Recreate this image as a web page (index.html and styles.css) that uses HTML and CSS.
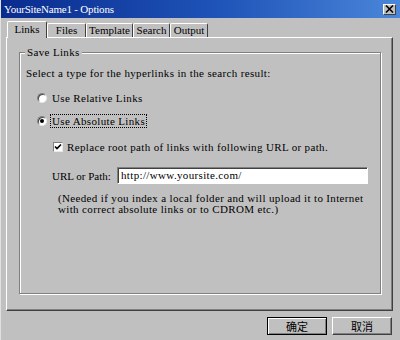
FILE: index.html
```html
<!DOCTYPE html>
<html lang="en">
<head>
    <meta charset="UTF-8">
    <title>YourSiteName1 - Options</title>
    <link rel="stylesheet" href="styles.css">
</head>
<body>
    <div class="window">
        <div class="titlebar">
            <span class="title">YourSiteName1 - Options</span>
            <span class="close-btn">
                <svg width="9" height="8" viewBox="0 0 9 8">
                    <path d="M1 0.5 L8 7.5 M8 0.5 L1 7.5" stroke="#000" stroke-width="1.6"/>
                </svg>
            </span>
        </div>

        <div class="dialog-body">
            <div class="tabs">
                <div class="tab active tab-links">Links</div>
                <div class="tab tab-files">Files</div>
                <div class="tab tab-template">Template</div>
                <div class="tab tab-search">Search</div>
                <div class="tab tab-output">Output</div>
            </div>

            <div class="panel">
                <fieldset class="group">
                    <legend>Save Links</legend>
                    <p class="intro">Select a type for the hyperlinks in the search result:</p>

                    <div class="option option-first">
                        <span class="radio"></span>
                        <span class="option-label">Use Relative Links</span>
                    </div>
                    <div class="option">
                        <span class="radio checked"></span>
                        <span class="option-label focused">Use Absolute Links</span>
                    </div>

                    <div class="check-row">
                        <span class="checkbox">
                            <svg width="8" height="8" viewBox="0 0 8 8">
                                <path d="M1 3.5 L3 5.5 L7 1.5" stroke="#000" stroke-width="1.7" fill="none"/>
                            </svg>
                        </span>
                        <span>Replace root path of links with following URL or path.</span>
                    </div>

                    <div class="url-row">
                        <span class="url-label">URL or Path:</span>
                        <span class="url-field">http://www.yoursite.com/</span>
                    </div>

                    <p class="note">(Needed if you index a local folder and will upload it to Internet<br>with correct absolute links or to CDROM etc.)</p>
                </fieldset>
            </div>

            <div class="buttons">
                <button class="btn default">确定</button>
                <button class="btn">取消</button>
            </div>
        </div>
    </div>
</body>
</html>
```

FILE: styles.css
```css
/* classic dialog look */
body {
    margin: 0;
    padding: 0;
    background-color: #c0c0c0;
}

.window {
    width: 400px;
    height: 340px;
    background-color: #c0c0c0;
    box-sizing: border-box;
    border-left: 1px solid #e0e0e0;
    font-family: "Liberation Serif", serif;
    font-size: 11px;
    letter-spacing: 0.35px;
    color: #000;
    overflow: hidden;
}

.titlebar {
    height: 18px;
    display: flex;
    align-items: center;
    justify-content: space-between;
    padding: 0 4px 0 3px;
    background: linear-gradient(to right, #0a2b8e, #1f54b8 55%, #4a86da);
}

.title {
    color: #fff;
    letter-spacing: -0.2px;
}

.close-btn {
    width: 13px;
    height: 11px;
    box-sizing: border-box;
    background-color: #c0c0c0;
    border: 1px solid;
    border-color: #fff #404040 #404040 #fff;
    display: flex;
    align-items: center;
    justify-content: center;
}

.dialog-body {
    padding: 0 7px 0 5px;
}

/* tabs */
.tabs {
    display: flex;
    align-items: flex-end;
    height: 19px;
    padding-left: 1px;
}

.tab {
    position: relative;
    height: 14px;
    line-height: 13px;
    box-sizing: border-box;
    text-align: center;
    letter-spacing: 0;
    background-color: #c0c0c0;
    border-top: 1px solid #fff;
    border-left: 1px solid #fff;
    border-right: 1px solid #404040;
    border-radius: 2px 2px 0 0;
}

.tab.active {
    height: 17px;
    line-height: 15px;
    margin-bottom: -1px;
    z-index: 1;
}

.tab-links { width: 40px; }
.tab-files { width: 39px; }
.tab-template { width: 47px; }
.tab-search { width: 37px; }
.tab-output { width: 38px; }

.panel {
    height: 274px;
    box-sizing: border-box;
    border: 1px solid;
    border-color: #fff #404040 #404040 #fff;
    box-shadow: inset -1px -1px 0 #808080;
    padding: 8px 11px 0 12px;
}

/* group box */
.group {
    margin: 0;
    padding: 0;
    height: 248px;
    box-sizing: border-box;
    border: 1px solid #808080;
    box-shadow: 1px 1px 0 #fff, inset 1px 1px 0 #fff;
}

.group legend {
    margin-left: 5px;
    padding: 0 2px;
    line-height: 12px;
    background-color: #c0c0c0;
}

.intro {
    margin: 9px 0 0 6px;
    line-height: 12px;
}

.option {
    display: flex;
    align-items: center;
    height: 14px;
    margin: 9px 0 0 17px;
}

.option-first {
    margin-top: 12px;
}

.radio {
    width: 10px;
    height: 10px;
    box-sizing: border-box;
    border-radius: 50%;
    background-color: #fff;
    border: 1px solid;
    border-color: #808080 #e8e8e8 #e8e8e8 #808080;
    box-shadow: inset 1px 1px 0 #404040;
    margin-right: 3px;
    display: flex;
    align-items: center;
    justify-content: center;
}

.radio.checked::after {
    content: "";
    width: 4px;
    height: 4px;
    border-radius: 50%;
    background-color: #000;
}

.option-label {
    padding: 0 1px;
    line-height: 12px;
    border: 1px dotted transparent;
}

.option-label.focused {
    border-color: #000;
}

.check-row {
    display: flex;
    align-items: center;
    height: 14px;
    margin: 12px 0 0 33px;
}

.checkbox {
    width: 10px;
    height: 10px;
    box-sizing: border-box;
    background-color: #fff;
    border: 1px solid;
    border-color: #808080 #e8e8e8 #e8e8e8 #808080;
    margin-right: 4px;
    display: flex;
    align-items: center;
    justify-content: center;
}

.url-row {
    display: flex;
    align-items: center;
    margin: 13px 0 0 32px;
}

.url-label {
    flex: none;
    width: 65px;
    letter-spacing: 0;
}

.url-field {
    flex: none;
    width: 251px;
    height: 17px;
    box-sizing: border-box;
    background-color: #fff;
    border: 1px solid;
    border-color: #808080 #fff #fff #808080;
    box-shadow: inset 1px 1px 0 #404040;
    padding-left: 3px;
    line-height: 15px;
}

.note {
    margin: 9px 0 0 38px;
    line-height: 11px;
}

/* bottom buttons */
.buttons {
    display: flex;
    justify-content: flex-end;
    gap: 5px;
    margin-top: 6px;
    padding-right: 1px;
}

.btn {
    width: 60px;
    height: 18px;
    box-sizing: border-box;
    padding: 0;
    background-color: #c0c0c0;
    border: 1px solid;
    border-color: #fff #404040 #404040 #fff;
    box-shadow: inset -1px -1px 0 #808080;
    font-family: "Noto Sans CJK SC", sans-serif;
    font-size: 11px;
    line-height: 14px;
    color: #000;
}

.btn.default {
    border: 1px solid #000;
    box-shadow: inset 1px 1px 0 #fff, inset -1px -1px 0 #808080;
}
```
